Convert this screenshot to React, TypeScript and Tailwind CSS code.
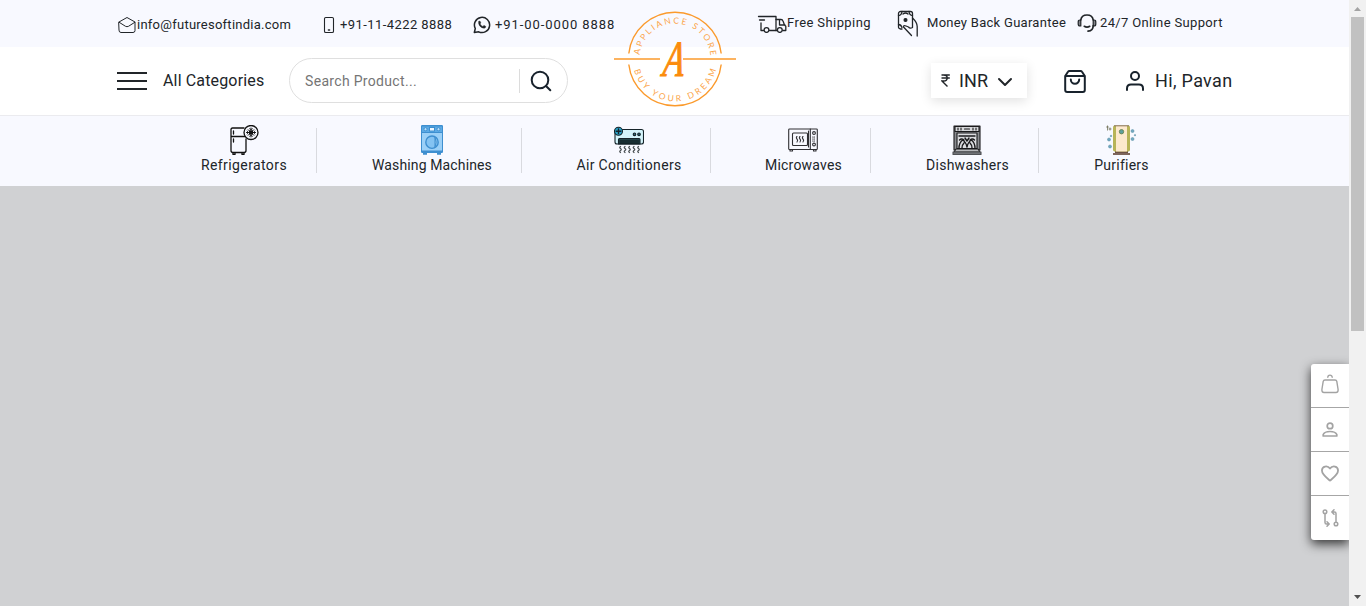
import type { ReactNode } from "react";

const line = {
  fill: "none",
  stroke: "currentColor",
  strokeLinecap: "round",
  strokeLinejoin: "round",
} as const;

function MailIcon() {
  return (
    <svg className="h-[18px] w-[18px] shrink-0" viewBox="0 0 18 18" {...line} strokeWidth="1">
      <path d="M1 6 9 1.500l8 4.500v8.500a2 2 0 0 1-2 2H3a2 2 0 0 1-2-2Z" />
      <path d="M1.200 6.300 7.500 10.300q1.500 .8 3 0l6.300-4" />
    </svg>
  );
}

function PhoneIcon() {
  return (
    <svg className="h-[18px] w-3 shrink-0" viewBox="0 0 12 18" {...line} strokeWidth="1.100">
      <rect x="1.500" y="1.500" width="9" height="15" rx="1.300" />
      <path d="M5.500 14h1" strokeWidth="1.600" />
    </svg>
  );
}

function WhatsappIcon() {
  return (
    <svg className="h-[18px] w-[18px] shrink-0" viewBox="0 0 18 18" {...line} strokeWidth="1.500">
      <path d="m1.300 16.500 1-4A7.600 7.600 0 1 1 5.700 15.800Z" />
      <path
        d="M5.600 5.700c.5-1 1.400-1 1.700-.3l.6 1.400-.7 1.100c.6 1.200 1.500 2 2.700 2.500l1-1.100 1.700.9c.5.3.2 1.300-.5 1.700-2.800 1.500-7.400-2.700-6.500-6.200Z"
        fill="currentColor"
        strokeWidth=".3"
      />
    </svg>
  );
}

function TruckIcon() {
  return (
    <svg className="h-[19px] w-[30px] shrink-0" viewBox="0 0 30 19" {...line} strokeWidth="1.300">
      <path d="M1.500 2.500H19v14h-6.500M2.500 6h5M4 9v7.500h2.500" />
      <path d="M19 5.500h5q1.500 0 2 1.500l1.500 4 1.300 1.300v4.200h-3M19 16.500h1M22.500 5.500v5.500H28" />
      <circle cx="9.500" cy="16" r="2.400" />
      <circle cx="22.800" cy="16" r="2.400" />
    </svg>
  );
}

function MoneyIcon() {
  return (
    <svg className="h-[27px] w-[22px] shrink-0" viewBox="0 0 22 27" {...line} strokeWidth="1.300">
      <path d="M5 19H3.500a2 2 0 0 1-2-2V3.500a2 2 0 0 1 2-2h10a2 2 0 0 1 2 2V17.500q-2.500 1.500-4-.5L9 16q-3-1-2.500 1L14.500 25.500" />
      <path d="M15.500 8q4.700 4.500 4.700 8.500v9.500M1.500 5.500q3 0 3.500-4M15.500 5.500q-3 0-3.500-4M6 4q2.500-2 5 0M1.500 14.500q2.500 0 3.500 3" />
      <circle cx="8.500" cy="10" r="1.400" fill="currentColor" />
    </svg>
  );
}

function HeadsetIcon() {
  return (
    <svg className="h-[20px] w-5 shrink-0" viewBox="0 0 20 20" {...line} strokeWidth="1.700">
      <path d="M3.800 7C4.200 3.800 6.800 2 10 2s5.800 1.800 6.200 5M16.200 12.500c0 3-1.700 5.500-5.200 5.700M7.300 13.300q2.700 1.800 5.400 0" />
      <path d="M3.800 7v6H3Q1.200 13 1.200 11V9Q1.200 7 3 7ZM16.200 7v6H17q1.800 0 1.800-2V9Q18.800 7 17 7Z" fill="currentColor" fillOpacity=".55" strokeWidth="1.200" />
    </svg>
  );
}

function Logo() {
  return (
    <svg className="h-[98px] w-[124px]" viewBox="0 0 124 98" fill="none" stroke="#fb9a2c">
      <path d="M15.800 43.500A46.500 46.500 0 0 1 108.200 43.500M15.800 54.500A46.500 46.500 0 0 0 108.200 54.500" strokeWidth="1.400" />
      <path d="M1 49H47M70 49h53" strokeWidth="1.600" />
      <path id="logo-top" d="M26.500 49A35.500 35.500 0 0 1 97.500 49" stroke="none" />
      <path id="logo-bottom" d="M19.500 49A42.500 42.500 0 0 0 104.500 49" stroke="none" />
      <g fill="#fba54a" stroke="none" fontFamily="Lato, sans-serif" fontSize="8.500">
        <text>
          <textPath href="#logo-top" startOffset="4" textLength="104">APPLIANCE STORE</textPath>
        </text>
        <text>
          <textPath href="#logo-bottom" startOffset="11.500" textLength="111">BUY YOUR DREAM</textPath>
        </text>
      </g>
      <text
        x="0"
        y="0"
        transform="translate(49 65.500) skewX(-7) scale(.78 1.150)"
        fill="#fb8c0c"
        stroke="#fb8c0c"
        strokeWidth=".9"
        fontFamily="'Liberation Serif', serif"
        fontStyle="italic"
        fontSize="44"
      >
        A
      </text>
    </svg>
  );
}

function FridgeIcon() {
  return (
    <svg className="h-[30px] w-[30px]" viewBox="0 0 30 30" {...line} strokeWidth="1.300">
      <path d="M15 3H3.500Q2 3 2 4.500V25.500Q2 27.500 4 27.500H15Q17 27.500 17 25.500V14M2 11.500H16M4.500 6v3M4.500 14v3" />
      <path d="M4 28v1.500h2V28M13 28v1.500h2V28" />
      <circle cx="22" cy="7.500" r="7" fill="#f8f9ff" />
      <path d="M22 3v9M17.500 7.500h9M19.200 4.700l5.600 5.600M24.800 4.700l-5.600 5.600" strokeWidth="1" />
      <path d="m20.500 3.700 1.500 1 1.500-1M20.500 11.300l1.500-1 1.500 1M18.200 6l1 1.500-1 1.500M25.800 6l-1 1.500 1 1.500" strokeWidth=".8" />
      <rect x="20" y="5.500" width="4" height="4" fill="currentColor" stroke="none" />
    </svg>
  );
}

function WasherIcon() {
  return (
    <svg className="h-[30px] w-[30px]" viewBox="0 0 30 30" fill="none" stroke="#3e8fd0">
      <path d="M6 28.500h4M20 28.500h4" strokeWidth="2.500" />
      <rect x="4.500" y=".5" width="21" height="27" rx=".5" fill="#9bd0f7" />
      <path d="M4.500 1h21v6.500h-21Z" fill="#5baae5" />
      <path d="M4.500 26.500h21" strokeWidth="2" />
      <circle cx="8.500" cy="4.200" r="1.600" fill="#b9e0fb" />
      <circle cx="21.500" cy="4.200" r="1.600" fill="#b9e0fb" />
      <rect x="12.500" y="2.500" width="5" height="3.500" fill="#eef8ff" />
      <circle cx="15" cy="17.200" r="6.200" fill="#84c3f2" strokeWidth="1.400" />
      <path d="M18 12q2.300 5.200 0 10.400Z" fill="#b9e0fb" />
    </svg>
  );
}

function AirConditionerIcon() {
  return (
    <svg className="h-[30px] w-[30px]" viewBox="0 0 30 30" {...line} stroke="#152329" strokeWidth="1.100">
      <rect x="1" y="4.500" width="28.500" height="14.500" rx="2" fill="#d3f4fb" />
      <path d="M4.500 19v-4.500q0-1 1-1h19.500q1 0 1 1V19Z" fill="#24454a" />
      <path d="M6 16h18.500M6 18h18.500" stroke="#0c1719" />
      <circle cx="20.500" cy="9.300" r="1.300" fill="#2c7180" />
      <circle cx="25" cy="9.300" r="1.300" fill="#2c7180" />
      <circle cx="4.500" cy="6.300" r="4" fill="#28a2c8" />
      <path d="M4.500 4v4.600M2.200 6.300h4.600" strokeWidth="1.400" />
      <path
        d="M6.500 21.500q-1.500 1 0 2t0 2 0 2M11 21.500q-1.500 1 0 2t0 2 0 2M15.500 21.500q-1.500 1 0 2t0 2 0 2M20 21.500q-1.500 1 0 2t0 2 0 2M24.500 21.500q-1.500 1 0 2t0 2 0 2"
        stroke="#4b5154"
        strokeWidth="1.300"
      />
    </svg>
  );
}

function MicrowaveIcon() {
  return (
    <svg className="h-[30px] w-[30px]" viewBox="0 0 30 30" {...line} stroke="#303034" strokeWidth="1.100">
      <rect x=".7" y="4" width="28.600" height="20.500" rx=".8" />
      <path d="M2 25v1h2.500v-1M25.500 25v1H28v-1" />
      <rect x="4.500" y="8" width="15" height="12.500" rx="1" />
      <path d="M22.300 4v20.500M20.500 6v16" />
      <path d="M9 11.500q-1.300 1.200 0 2.500t0 3M12 11.500q-1.300 1.200 0 2.500t0 3M15 11.500q-1.300 1.200 0 2.500t0 3" />
      <circle cx="26" cy="8" r="1.400" />
      <circle cx="26" cy="19.500" r="1.400" />
      <path d="M24.700 12h2.800M24.700 14h2.800M24.700 16h2.800" strokeDasharray=".3 1.200" />
    </svg>
  );
}

function DishwasherIcon() {
  return (
    <svg className="h-[30px] w-[30px]" viewBox="0 0 30 30" {...line} stroke="#1a1a1c" strokeWidth="1.100">
      <path d="M2 1h26v24H2Z" fill="#8b8d91" />
      <path d="M3 1.500h24v5H3Z" fill="#d6d7da" />
      <path d="M6 3v2M9 3v2M12.500 4h5M21 3v2M24 3v2" />
      <rect x="5" y="8" width="20" height="15.500" fill="#dcdde0" />
      <path d="M7 11h16M7 23q0-5 3.500-8 3.500 2 4.500 7 1-5 4.500-7Q23 18 23 23M10 23q0-3 2-5M20 23q0-3-2-5M7.500 15q2-2 4.500 0M18 15q2.500-2 4.500 0M13 13l2 3 2-3" strokeWidth="1.400" />
      <path d="M4 24h22l2 3H2Z" fill="#b7b8bb" />
      <path d="M1 27h28v2.500H1Z" fill="#707276" stroke="#505256" />
    </svg>
  );
}

function PurifierIcon() {
  return (
    <svg className="h-[30px] w-[30px]" viewBox="0 0 30 30" fill="none">
      <path d="M9 26h13v3H9Z" fill="#6b5145" />
      <path d="M7 28h17v2H7Z" fill="#7d655b" />
      <path d="M8.500.5h14q1.500 0 1.500 2v22q0 2-1.500 2h-14Q7 26.500 7 24.500v-22q0-2 1.500-2Z" fill="#b8b457" />
      <path d="M10 .5h11v26H10Z" fill="#fde9cd" />
      <path d="M8 .8h15" stroke="#89745d" />
      <circle cx="15.500" cy="6.700" r="2.200" fill="#5e9f9d" stroke="#617d47" strokeWidth=".8" />
      <g fill="#6fa7c1" stroke="#5f93a8" strokeWidth=".6">
        <circle cx="3" cy="14.500" r="1.500" />
        <circle cx="5" cy="11" r=".8" />
        <circle cx="4" cy="21.500" r="1.500" />
        <circle cx="26.500" cy="6" r="1.500" />
        <circle cx="26.500" cy="14" r="1.500" />
        <circle cx="29" cy="10.200" r=".7" />
      </g>
      <path d="M1.500.5v5M.2 2h2.600M4 2.500v3M2.500 4h3" stroke="#606040" strokeWidth=".7" />
    </svg>
  );
}

const categories: { label: string; tracking: string; width: string; icon: ReactNode }[] = [
  { label: "Refrigerators", tracking: "tracking-[0.4px]", width: "w-[171px]", icon: <FridgeIcon /> },
  { label: "Washing Machines", tracking: "tracking-[0.13px]", width: "w-[205px]", icon: <WasherIcon /> },
  { label: "Air Conditioners", tracking: "tracking-[0.31px]", width: "w-[189px]", icon: <AirConditionerIcon /> },
  { label: "Microwaves", tracking: "tracking-[0.21px]", width: "w-[160px]", icon: <MicrowaveIcon /> },
  { label: "Dishwashers", tracking: "tracking-[0.27px]", width: "w-[168px]", icon: <DishwasherIcon /> },
  { label: "Purifiers", tracking: "tracking-[0.23px]", width: "w-[140px]", icon: <PurifierIcon /> },
];

function TopBar() {
  return (
    <div className="flex h-[47px] items-start whitespace-nowrap bg-[#f8f9ff] pl-[118px] text-[13px] leading-5">
      <div className="mt-[15px] flex w-[205px] items-center gap-px">
        <MailIcon />
        <span className="tracking-[0.25px]">info@futuresoftindia.com</span>
      </div>
      <div className="mt-[15px] flex w-[150px] items-center gap-[5px]">
        <PhoneIcon />
        <span className="tracking-[0.42px]">+91-11-4222 8888</span>
      </div>
      <div className="mt-[15px] flex w-[284px] items-center gap-1">
        <WhatsappIcon />
        <span className="tracking-[0.92px]">+91-00-0000 8888</span>
      </div>
      <div className="mt-[13px] flex w-[140px] items-center">
        <TruckIcon />
        <span className="tracking-[0.41px]">Free Shipping</span>
      </div>
      <div className="mt-[10px] flex w-[180px] items-center gap-2">
        <MoneyIcon />
        <span className="-mt-px tracking-[0.28px]">Money Back Guarantee</span>
      </div>
      <div className="mt-[13px] flex items-center gap-[3px]">
        <HeadsetIcon />
        <span className="tracking-[0.35px]">24/7 Online Support</span>
      </div>
    </div>
  );
}

function Header() {
  return (
    <header className="flex h-[69px] items-center whitespace-nowrap border-b border-[#ebebef] bg-white pl-[117px]">
      <div className="flex w-[30px] flex-col gap-[6px]">
        <span className="h-[2px] bg-[#212529]" />
        <span className="h-[2px] bg-[#212529]" />
        <span className="h-[2px] bg-[#212529]" />
      </div>
      <span className="ml-4 w-[126px] text-base tracking-[0.15px]">All Categories</span>
      <div className="mb-px flex h-[45px] w-[279px] items-center rounded-full border border-[#dfdfdf] pl-[15px]">
        <span className="w-[214px] text-sm tracking-[0.32px] text-[#757575]">Search Product...</span>
        <span className="h-6 w-px bg-[#dcdcdc]" />
        <svg className="ml-[10px] h-[22px] w-[22px] text-[#18222c]" viewBox="0 0 22 22" {...line} strokeWidth="2">
          <circle cx="10" cy="10" r="8.300" />
          <path d="m16 16 4.300 4.300" />
        </svg>
      </div>
      <div className="mb-px ml-[363px] flex h-[35px] w-24 items-center bg-white pl-[10px] text-lg shadow-[0_3px_12px_rgba(0,0,0,0.12)]">
        <svg className="mr-[9px] h-[13px] w-[9px]" viewBox="0 0 9 13" fill="none" stroke="currentColor" strokeWidth="1.400">
          <path d="M.5 1h8.300M.5 4h8.300M.5 1h2.200q3.500 0 3.500 3T2.700 7H1l5.500 5.500" />
        </svg>
        <span className="w-[38px] tracking-[0.07px]">INR</span>
        <svg className="h-4 w-4" viewBox="0 0 16 16" {...line} strokeWidth="2">
          <path d="m2 6 6 6 6-6" />
        </svg>
      </div>
      <svg className="ml-[37px] h-[23px] w-[22px] text-[#18222c]" viewBox="0 0 22 23" {...line} strokeWidth="2">
        <path d="M1.200 6h19.600v14a2 2 0 0 1-2 2H3.200a2 2 0 0 1-2-2ZM1.200 6 4 1.800Q4.500 1 5.500 1h11q1 0 1.500.8L20.800 6M6.800 9.500a4.200 4.200 0 0 0 8.400 0" />
      </svg>
      <svg className="ml-10 h-5 w-[18px] text-[#18222c]" viewBox="0 0 18 20" {...line} strokeWidth="2">
        <circle cx="9" cy="5" r="4" />
        <path d="M1 19v-1.500q0-4 4-4h8q4 0 4 4V19" />
      </svg>
      <span className="ml-[11px] text-lg tracking-[0.33px]">Hi, Pavan</span>
    </header>
  );
}

function CategoryNav() {
  return (
    <nav className="flex h-[70px] bg-[#f8f9ff] pl-[146px] pt-3">
      {categories.map((c) => (
        <a
          key={c.label}
          href="#"
          className={`${c.width} flex h-[45px] flex-col items-center whitespace-nowrap border-r border-[#d9dadf] pl-[55px] pr-[29px] text-sm last:border-r-0 last:pr-[30px]`}
        >
          <span className="-ml-px -mt-[3px] h-[30px] text-[#111]">{c.icon}</span>
          <span className={`${c.tracking} leading-5`}>{c.label}</span>
        </a>
      ))}
    </nav>
  );
}

function SideDock() {
  return (
    <aside className="absolute right-0 top-[364px] flex w-[38px] flex-col rounded-l-[3px] bg-white text-[#a3a3a3] shadow-[0_4px_11px_rgba(0,0,0,0.75)]">
      <div className="flex h-11 items-center justify-center border-b border-[#a6a6a6] pb-1">
        <svg className="h-5 w-[18px]" viewBox="0 0 18 20" {...line} strokeWidth="1.400">
          <path d="M4 6h10q1.500 0 1.800 1.300l1.300 8.200q.2 3-2.100 3H3q-2.300 0-2.100-3l1.300-8.200Q2.500 6 4 6ZM6.800 3.300a2.200 2.200 0 0 1 4.400 0" />
        </svg>
      </div>
      <div className="flex h-11 items-center justify-center border-b border-[#a6a6a6]">
        <svg className="h-[15px] w-4" viewBox="0 0 16 15" {...line} strokeWidth="1.700">
          <circle cx="8" cy="3.900" r="2.800" />
          <path d="M1.200 14v-1.500Q2.500 9.500 8 9.500t6.800 3V14Z" />
        </svg>
      </div>
      <div className="flex h-11 items-center justify-center border-b border-[#a6a6a6]">
        <svg className="h-[17px] w-[18px]" viewBox="0 0 19 17" {...line} strokeWidth="1.900">
          <path d="M9.500 16C6 13 1 9.500 1 5.300 1 .8 6.800-.5 9.500 3.300 12.200-.5 18 .8 18 5.300 18 9.500 13 13 9.500 16Z" />
        </svg>
      </div>
      <div className="flex h-11 items-center justify-center">
        <svg className="h-[18px] w-[17px]" viewBox="0 0 17 18" {...line} strokeWidth="1.500">
          <circle cx="3" cy="2.800" r="1.800" />
          <circle cx="14" cy="15" r="1.800" />
          <path d="M3 5v8.500Q3 15 4.500 15h2.300M5 12.800 7.200 15 5 17.200M14 12.500V4.500Q14 3 12.500 3H9.800M12 .8 9.800 3 12 5.200" />
        </svg>
      </div>
    </aside>
  );
}

function ScrollBar() {
  return (
    <div className="flex h-full w-[17px] shrink-0 flex-col items-center bg-[#f1f1f1]">
      <svg className="h-[17px] w-[17px] shrink-0" viewBox="0 0 17 17" fill="#a3a3a3">
        <path d="M5 11h7L8.500 7Z" />
      </svg>
      <div className="h-[314px] w-[13px] bg-[#c1c1c1]" />
      <svg className="mt-auto h-[17px] w-[17px] shrink-0" viewBox="0 0 17 17" fill="#505050">
        <path d="M5 6h7l-3.500 4Z" />
      </svg>
    </div>
  );
}

export default function App() {
  return (
    <div className="flex h-[606px] w-[1366px] overflow-hidden font-['Roboto',sans-serif] text-[#212529]">
      <main className="relative flex flex-1 flex-col overflow-hidden">
        <TopBar />
        <Header />
        <CategoryNav />
        <div className="flex-1 bg-[#d0d1d3]" />
        <div className="absolute left-[613px] top-[10px]">
          <Logo />
        </div>
        <SideDock />
      </main>
      <ScrollBar />
    </div>
  );
}
